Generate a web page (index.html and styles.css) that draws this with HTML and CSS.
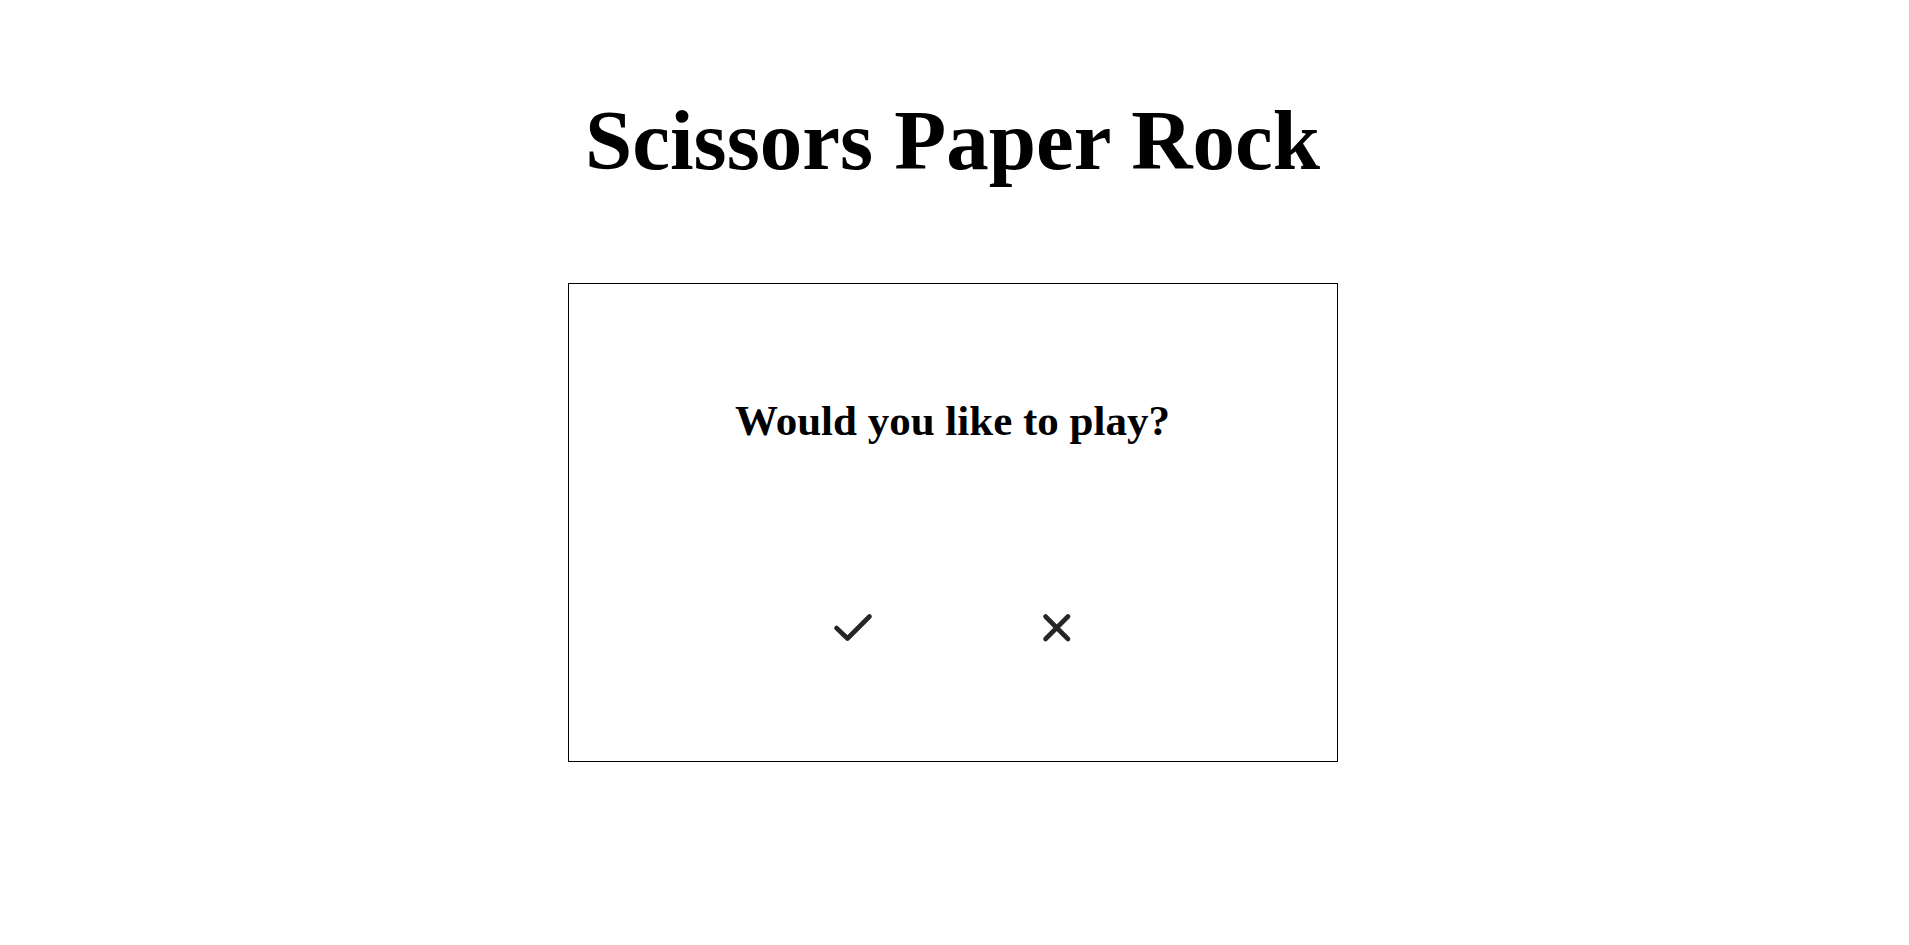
FILE: index.html
```html
<!DOCTYPE html>
<html lang="en">
<head>
<meta charset="utf-8">
<title>Scissors Paper Rock</title>
<link rel="stylesheet" href="styles.css">
</head>
<body>
<main class="page">
  <h1 class="title">Scissors Paper Rock</h1>
  <section class="card">
    <h2 class="question">Would you like to play?</h2>
    <div class="choices">
      <button class="choice" type="button" aria-label="Yes">
        <svg class="icon-check" width="42" height="30" viewBox="0 0 42 30" fill="none" stroke="#262626" stroke-width="4.6" stroke-linecap="round" stroke-linejoin="round">
          <polyline points="3.5,15 14.5,25.5 36.5,3.5"/>
        </svg>
      </button>
      <button class="choice" type="button" aria-label="No">
        <svg class="icon-x" width="30" height="30" viewBox="0 0 30 30" fill="none" stroke="#262626" stroke-width="4.6" stroke-linecap="round">
          <line x1="3.5" y1="3.5" x2="26" y2="26"/>
          <line x1="26" y1="3.5" x2="3.5" y2="26"/>
        </svg>
      </button>
    </div>
  </section>
</main>
</body>
</html>
```

FILE: styles.css
```css
html, body {
  margin: 0;
  padding: 0;
  background: #ffffff;
}

body {
  font-family: "Liberation Serif", "Times New Roman", serif;
  color: #000000;
  padding-right: 4px;
}

.page {
  display: flex;
  flex-direction: column;
  align-items: center;
}

.title {
  margin: 91px 0 94px;
  font-size: 85px;
  font-weight: bold;
  line-height: normal;
}

.card {
  box-sizing: border-box;
  width: 770px;
  height: 479px;
  border: 1px solid #000000;
  display: flex;
  flex-direction: column;
  align-items: center;
}

.question {
  margin: 112px 0 0;
  font-size: 43px;
  font-weight: bold;
  line-height: normal;
}

.choices {
  margin-top: 168px;
  display: flex;
  gap: 167px;
  align-items: center;
}

.choice {
  border: none;
  background: none;
  padding: 0;
  margin: 0;
  display: block;
  cursor: pointer;
}

.choice svg {
  display: block;
}
```
